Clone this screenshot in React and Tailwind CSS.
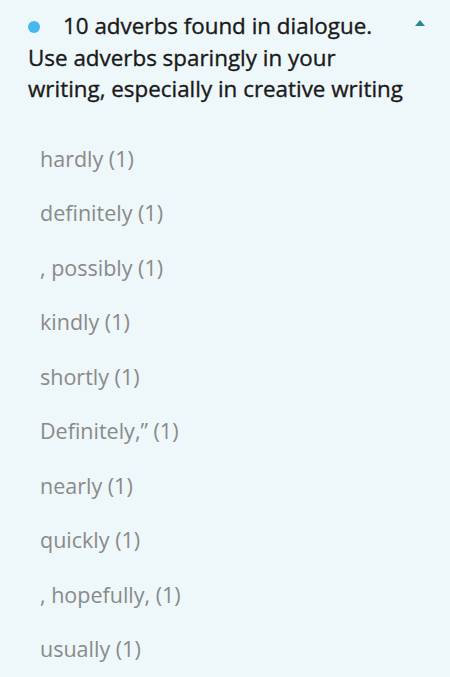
import React from 'react';

const adverbs = [
  'hardly (1)',
  'definitely (1)',
  ', possibly (1)',
  'kindly (1)',
  'shortly (1)',
  'Definitely,\u201d (1)',
  'nearly (1)',
  'quickly (1)',
  ', hopefully, (1)',
  'usually (1)',
];

const App = () => {
  return (
    <div
      className="w-[450px] h-[677px] overflow-hidden bg-[#eef7f9] text-[#222]"
      style={{ fontFamily: '"Open Sans", "Noto Sans", sans-serif' }}
    >
      <div className="flex items-start pl-[28px] pr-[25px] pt-[10px]">
        <p className="flex-1 text-[22.4px] leading-[31.5px] text-[#1a1a1a] [-webkit-text-stroke:0.35px_#1a1a1a]">
          <span className="inline-block w-[12px] h-[12px] rounded-full bg-[#45b8ef] mr-[23px] align-[1px]"></span>
          10 adverbs found in dialogue. Use adverbs sparingly in your writing, especially in creative writing
        </p>
        <svg width="10" height="6" viewBox="0 0 10 6" className="mt-[10px] ml-[3px] shrink-0">
          <path d="M5 0L10 6H0Z" fill="#2a8a8f" />
        </svg>
      </div>

      <ul className="mt-[27px] pl-[40px]">
        {adverbs.map((a) => (
          <li key={a} className="text-[21.5px] leading-[54.5px] text-[#8a8a8a]">
            {a}
          </li>
        ))}
      </ul>
    </div>
  );
};

export default App;
